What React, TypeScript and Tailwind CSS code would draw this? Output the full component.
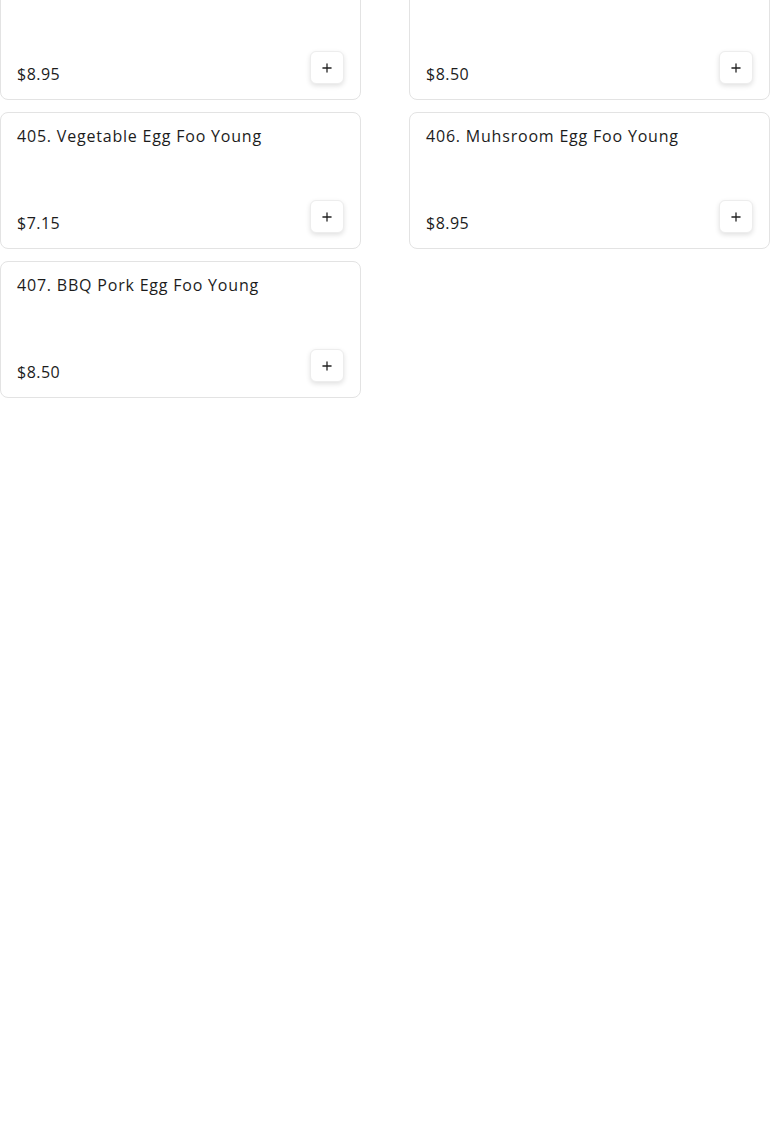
import { Plus } from 'lucide-react';

interface Item {
  name: string;
  price: string;
}

// first row sits above the fold, only its bottom half is visible
const items: Item[] = [
  { name: '', price: '$8.95' },
  { name: '', price: '$8.50' },
  { name: '405. Vegetable Egg Foo Young', price: '$7.15' },
  { name: '406. Muhsroom Egg Foo Young', price: '$8.95' },
  { name: '407. BBQ Pork Egg Foo Young', price: '$8.50' },
];

function MenuCard({ item }: { item: Item }) {
  return (
    <div className="h-[137px] flex flex-col justify-between border border-[#e3e3e3] rounded-lg px-4 pt-[11px] pb-[15px] bg-white">
      <p className="text-[16px] leading-6 tracking-[0.05em] text-[#1c1c1c] min-h-6">{item.name}</p>
      <div className="flex items-end justify-between">
        <span className="text-[16px] leading-6 tracking-[0.03em] text-[#1c1c1c] mb-[-2px]">{item.price}</span>
        <button className="w-[34px] h-[33px] flex items-center justify-center rounded-md border border-[#ededed] bg-white shadow-[0_2px_5px_rgba(0,0,0,0.12)] text-[#222]">
          <Plus className="w-[14px] h-[14px]" strokeWidth={2.2} />
        </button>
      </div>
    </div>
  );
}

export default function App() {
  return (
    <div className="min-h-screen bg-white overflow-hidden" style={{ fontFamily: '"Open Sans", "Noto Sans", sans-serif' }}>
      <div className="grid grid-cols-2 gap-x-12 gap-y-3 -mt-[37px]">
        {items.map((item, i) => (
          <MenuCard key={i} item={item} />
        ))}
      </div>
    </div>
  );
}
